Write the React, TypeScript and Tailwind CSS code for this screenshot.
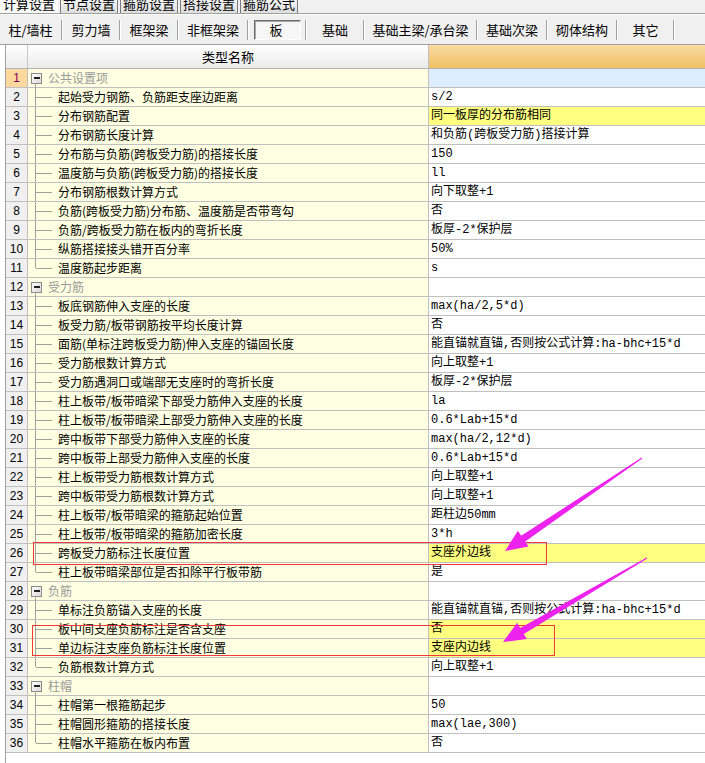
type Row = {
  n: number;
  label: string;
  value?: string;
  group?: boolean;
  last?: boolean;
  hl?: 'yellow' | 'blue';
};

const rows: Row[] = [
  { n: 1, label: '公共设置项', group: true, hl: 'blue' },
  { n: 2, label: '起始受力钢筋、负筋距支座边距离', value: 's/2' },
  { n: 3, label: '分布钢筋配置', value: '同一板厚的分布筋相同', hl: 'yellow' },
  { n: 4, label: '分布钢筋长度计算', value: '和负筋(跨板受力筋)搭接计算' },
  { n: 5, label: '分布筋与负筋(跨板受力筋)的搭接长度', value: '150' },
  { n: 6, label: '温度筋与负筋(跨板受力筋)的搭接长度', value: 'll' },
  { n: 7, label: '分布钢筋根数计算方式', value: '向下取整+1' },
  { n: 8, label: '负筋(跨板受力筋)分布筋、温度筋是否带弯勾', value: '否' },
  { n: 9, label: '负筋/跨板受力筋在板内的弯折长度', value: '板厚-2*保护层' },
  { n: 10, label: '纵筋搭接接头错开百分率', value: '50%' },
  { n: 11, label: '温度筋起步距离', value: 's', last: true },
  { n: 12, label: '受力筋', group: true },
  { n: 13, label: '板底钢筋伸入支座的长度', value: 'max(ha/2,5*d)' },
  { n: 14, label: '板受力筋/板带钢筋按平均长度计算', value: '否' },
  { n: 15, label: '面筋(单标注跨板受力筋)伸入支座的锚固长度', value: '能直锚就直锚,否则按公式计算:ha-bhc+15*d' },
  { n: 16, label: '受力筋根数计算方式', value: '向上取整+1' },
  { n: 17, label: '受力筋遇洞口或端部无支座时的弯折长度', value: '板厚-2*保护层' },
  { n: 18, label: '柱上板带/板带暗梁下部受力筋伸入支座的长度', value: 'la' },
  { n: 19, label: '柱上板带/板带暗梁上部受力筋伸入支座的长度', value: '0.6*Lab+15*d' },
  { n: 20, label: '跨中板带下部受力筋伸入支座的长度', value: 'max(ha/2,12*d)' },
  { n: 21, label: '跨中板带上部受力筋伸入支座的长度', value: '0.6*Lab+15*d' },
  { n: 22, label: '柱上板带受力筋根数计算方式', value: '向上取整+1' },
  { n: 23, label: '跨中板带受力筋根数计算方式', value: '向上取整+1' },
  { n: 24, label: '柱上板带/板带暗梁的箍筋起始位置', value: '距柱边50mm' },
  { n: 25, label: '柱上板带/板带暗梁的箍筋加密长度', value: '3*h' },
  { n: 26, label: '跨板受力筋标注长度位置', value: '支座外边线', hl: 'yellow' },
  { n: 27, label: '柱上板带暗梁部位是否扣除平行板带筋', value: '是', last: true },
  { n: 28, label: '负筋', group: true },
  { n: 29, label: '单标注负筋锚入支座的长度', value: '能直锚就直锚,否则按公式计算:ha-bhc+15*d' },
  { n: 30, label: '板中间支座负筋标注是否含支座', value: '否', hl: 'yellow' },
  { n: 31, label: '单边标注支座负筋标注长度位置', value: '支座内边线', hl: 'yellow' },
  { n: 32, label: '负筋根数计算方式', value: '向上取整+1', last: true },
  { n: 33, label: '柱帽', group: true },
  { n: 34, label: '柱帽第一根箍筋起步', value: '50' },
  { n: 35, label: '柱帽圆形箍筋的搭接长度', value: 'max(lae,300)' },
  { n: 36, label: '柱帽水平箍筋在板内布置', value: '否', last: true },
];

const tabs = ['计算设置', '节点设置', '箍筋设置', '搭接设置', '箍筋公式'];

const tools: { label: string; w: string; pressed?: boolean }[] = [
  { label: '柱/墙柱', w: 'w-[61px]' },
  { label: '剪力墙', w: 'w-[56px]' },
  { label: '框架梁', w: 'w-[56px]' },
  { label: '非框架梁', w: 'w-[68px]' },
  { label: '板', w: 'w-[56px]', pressed: true },
  { label: '基础', w: 'w-[56px]' },
  { label: '基础主梁/承台梁', w: 'w-[111px]' },
  { label: '基础次梁', w: 'w-[68px]' },
  { label: '砌体结构', w: 'w-[68px]' },
  { label: '其它', w: 'w-[55px]' },
];

// tapered arrow: thin tail, wide shaft near the head, then a triangle head
function arrowPoints(tx: number, ty: number, px: number, py: number) {
  const dx = px - tx;
  const dy = py - ty;
  const len = Math.hypot(dx, dy);
  const ux = dx / len;
  const uy = dy / len;
  const nx = -uy;
  const ny = ux;
  const hx = px - ux * 22;
  const hy = py - uy * 22;
  const pts = [
    [tx + nx * 0.5, ty + ny * 0.5],
    [hx + nx * 3.5, hy + ny * 3.5],
    [hx + nx * 9.5, hy + ny * 9.5],
    [px, py],
    [hx - nx * 9.5, hy - ny * 9.5],
    [hx - nx * 3.5, hy - ny * 3.5],
    [tx - nx * 0.5, ty - ny * 0.5],
  ];
  return pts.map((p) => p.map((v) => v.toFixed(1)).join(',')).join(' ');
}

const NameCell = ({ row }: { row: Row }) => {
  if (row.group) {
    return (
      <div className="flex h-full items-center">
        <div className="relative ml-[3px] flex h-[11px] w-[11px] items-center justify-center border border-[#8a8a8a] bg-linear-to-br from-white to-[#d8d8d8]">
          <div className="h-[2px] w-[6px] bg-[#202020]" />
          <div className="absolute left-[3px] top-full h-[5px] w-px bg-[#a0a0a0]" />
        </div>
        <span className="ml-[6px] text-[#9a9a9a]">{row.label}</span>
      </div>
    );
  }
  return (
    <div className="flex h-full items-center">
      {row.last ? (
        <div className="ml-[7px] h-[9px] w-px self-start bg-[#a0a0a0]" />
      ) : (
        <div className="ml-[7px] w-px self-stretch bg-[#a0a0a0]" />
      )}
      <div className="h-px w-[16px] bg-[#a0a0a0]" />
      <span className="ml-[6px] whitespace-nowrap text-black">{row.label}</span>
    </div>
  );
};

const TableRow = ({ row }: { row: Row }) => {
  const valueBg =
    row.hl === 'yellow' ? 'bg-[#ffff80]' : row.hl === 'blue' ? 'bg-[#ddedfd]' : 'bg-white';
  return (
    <div className="flex h-[19px] border-b border-[#c0c0c0] text-[12px] leading-[18px]">
      <div
        className={
          row.n === 1
            ? "w-[22px] shrink-0 border-r border-[#c0c0c0] bg-[#fcd89c] text-center text-[#800060] [font-family:'Liberation_Sans',sans-serif]"
            : "w-[22px] shrink-0 border-r border-[#c0c0c0] bg-[#f0f0f0] text-center text-black [font-family:'Liberation_Sans',sans-serif]"
        }
      >
        {row.n}
      </div>
      <div className="w-[401px] shrink-0 border-r border-[#c0c0c0] bg-[#ffffe1]">
        <NameCell row={row} />
      </div>
      <div
        className={`flex-1 whitespace-nowrap pl-[2px] [font-family:'Liberation_Mono','Noto_Sans_CJK_SC',monospace] ${valueBg}`}
      >
        {row.value}
      </div>
    </div>
  );
};

export default function App() {
  return (
    <div className="relative flex h-[763px] w-[705px] flex-col overflow-hidden bg-white text-[12px] [font-family:'Noto_Sans_CJK_SC',sans-serif]">
      {/* tab strip, cut off at the top */}
      <div className="flex h-[14px] shrink-0 overflow-hidden border-b border-[#a0a0a0] bg-[#f0f0f0]">
        {tabs.map((t, i) => (
          <div
            key={t}
            className={
              i === 0
                ? 'mr-[2px] w-[58px] overflow-hidden bg-[#fafafa] text-center'
                : 'mr-[2px] w-[58px] overflow-hidden border-x border-[#7a7a7a] bg-linear-to-b from-[#f4f4f4] to-[#dedede] text-center'
            }
          >
            <div className="-mt-[4px] text-[13px] leading-[16px] text-black">{t}</div>
          </div>
        ))}
      </div>

      {/* toolbar */}
      <div className="flex h-[31px] shrink-0 items-center border-t border-b border-t-white border-b-[#a0a0a0] bg-[#f0f0f0]">
        {tools.map((t) => (
          <div key={t.label} className="flex items-center">
            <div className={`${t.w} flex h-[29px] items-center justify-center`}>
              {t.pressed ? (
                <div className="flex h-[20px] w-[47px] items-center justify-center border border-t-[#6a6a6a] border-l-[#6a6a6a] border-b-white border-r-white bg-[#f6f6f6] shadow-[inset_1px_1px_0_#a8a8a8]">
                  <span className="-ml-[2px] text-[13px] text-black">{t.label}</span>
                </div>
              ) : (
                <span className="text-[13px] text-black">{t.label}</span>
              )}
            </div>
            <div className="h-[20px] w-[2px] border-l border-r border-l-[#a0a0a0] border-r-white" />
          </div>
        ))}
      </div>

      {/* grid */}
      <div className="ml-[5px] flex flex-1 flex-col border-l border-[#a0a0a0]">
        <div className="flex h-[24px] shrink-0 border-b border-[#b4b4b4]">
          <div className="w-[22px] shrink-0 border-r border-[#c8c8c8] bg-linear-to-b from-white to-[#ebebeb]" />
          <div className="flex w-[401px] shrink-0 items-center justify-center border-r border-[#c0c0c0] bg-linear-to-b from-white to-[#ebebeb] text-[13px] text-black">
            类型名称
          </div>
          <div className="flex-1 bg-linear-to-b from-[#fadca2] to-[#f0c062]" />
        </div>
        {rows.map((r) => (
          <TableRow key={r.n} row={r} />
        ))}
      </div>

      {/* red annotation boxes */}
      <div className="pointer-events-none absolute left-[33px] top-[542px] h-[23px] w-[514px] border border-[#f03a3a]" />
      <div className="pointer-events-none absolute left-[32px] top-[625px] h-[31px] w-[523px] border border-[#f03a3a]" />

      {/* magenta arrows */}
      <svg className="pointer-events-none absolute left-0 top-0" width="705" height="763" viewBox="0 0 705 763">
        <polygon points={arrowPoints(642, 458, 505, 551)} fill="#ee22ee" />
        <polygon points={arrowPoints(647, 558, 503, 642)} fill="#ee22ee" />
      </svg>
    </div>
  );
}
